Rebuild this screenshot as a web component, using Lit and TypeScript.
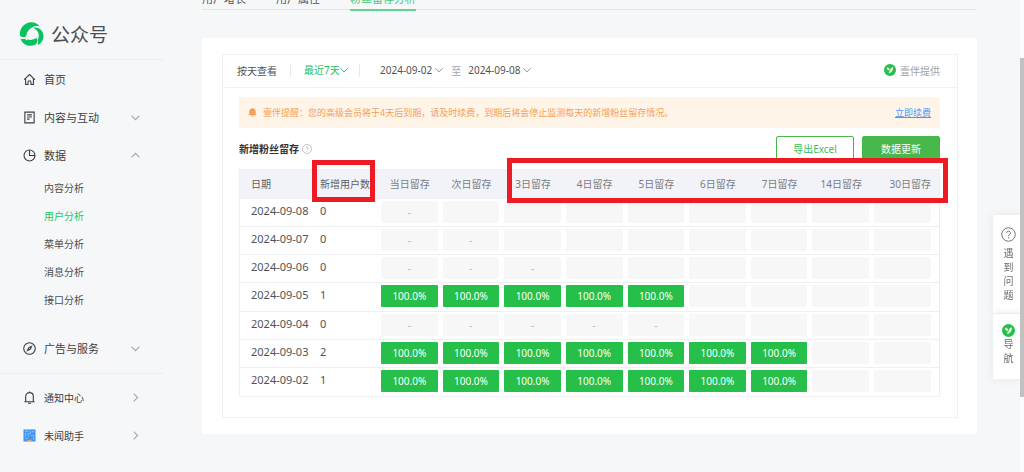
import { LitElement, html, css, svg, nothing } from "lit";
import { customElement, property, state } from "lit/decorators.js";
import { classMap } from "lit/directives/class-map.js";

const baseStyles = css`
  :host {
    display: block;
    box-sizing: border-box;
    font-family: "Noto Sans", "Noto Sans CJK SC", sans-serif;
    font-size: 10px;
    color: #505356;
  }
  *,
  *::before,
  *::after {
    box-sizing: border-box;
  }
  a {
    color: inherit;
    text-decoration: none;
  }
  button,
  select {
    font: inherit;
    color: inherit;
    background: none;
    border: 0;
    padding: 0;
    margin: 0;
    cursor: pointer;
  }
  svg {
    display: block;
    flex: none;
  }
`;

const chevron = (dir: "down" | "up" | "right", size = 9) => {
  const d = {
    down: "M0.6 3 L5 7.4 L9.4 3",
    up: "M0.6 7 L5 2.6 L9.4 7",
    right: "M3 0.6 L7.4 5 L3 9.4",
  }[dir];
  return html`<svg width=${size} height=${size} viewBox="0 0 10 10" fill="none" stroke="currentColor" aria-hidden="true">
    <path d=${d} stroke-width="1.2" />
  </svg>`;
};

const leafBadge = (size: number) => html`<svg width=${size} height=${size} viewBox="0 0 24 24" aria-hidden="true">
  <circle cx="12" cy="12" r="12" fill="#25bf49" />
  <path d="M6 7.4 C9.4 7 10.8 8.8 11 12.4 C8 12.6 6 10.8 6 7.4 Z" fill="#fff" stroke="#fff" stroke-width="0.8" />
  <path d="M18.4 6.6 C14.6 6.8 13 9.4 12.6 12 C12.2 14.4 11.2 15.4 9.2 16 L10.6 18.4 C15.6 17 18.2 12.4 18.4 6.6 Z" fill="#fff" />
</svg>`;

const questionMark = (size: number, stroke: number) => html`<svg width=${size} height=${size} viewBox="0 0 16 16" fill="none" stroke="currentColor" stroke-width=${stroke} aria-hidden="true">
  <circle cx="8" cy="8" r="7.2" />
  <path d="M5.9 6.5 C5.9 3.8 10.1 3.8 10.1 6.4 C10.1 7.8 8 8 8 9.7" />
  <path d="M8 10.8 V12.1" />
</svg>`;

const icons: Record<string, unknown> = {
  home: svg`<path d="M1.2 7.2 L7 1.6 L12.8 7.2 M2.8 6.2 V12.4 H5.4 V9.6 Q5.4 8.3 7 8.3 Q8.6 8.3 8.6 9.6 V12.4 H11.2 V6.2" />`,
  doc: svg`<path d="M2 1.2 H12 V12.8 H2 Z M4.4 4.2 H9.6 M4.4 6.5 H9.6 M4.4 8.8 H7" />`,
  pie: svg`<circle cx="7" cy="7" r="5.9" /><path d="M7 1.1 V7 H12.9" />`,
  compass: svg`<circle cx="7" cy="7" r="6.2" /><path d="M10 4 L8.1 8.1 L4 10 L5.9 5.9 Z" fill="currentColor" stroke-width="0.5" /><path d="M6.4 7.6 L7.6 6.4" stroke="#fff" stroke-width="0.7" />`,
  bell: svg`<path d="M1.4 11.6 H12.6 M2.9 11.6 V6 C2.9 3.4 4.7 1.8 7 1.8 C9.3 1.8 11.1 3.4 11.1 6 V11.6 M7 1.8 V0.6 M5.4 13.2 H8.6" />`,
  helper: svg`<rect x="0.5" y="0.5" width="13" height="13" fill="#4596f0" stroke="none" />
    <path d="M2.2 2.4 H6 M8 2.2 V5.4 M2.6 4.6 V8 M4.6 5 H7 M9.6 3 H12 M4.6 7.4 H6.6 M8.4 7 H12 M2.4 10 H5 M11.4 8.6 V11.6" stroke="#a9cffb" stroke-width="0.8" />
    <path d="M4.6 11.2 L7 12.4 L9.4 11.2 L8.6 14 H5.4 Z" fill="#f2b866" stroke="none" />`,
};

interface NavEntry {
  label: string;
  icon: string;
  arrow?: "down" | "up" | "right";
  children?: string[];
}

@customElement("side-nav")
export class SideNav extends LitElement {
  @property() active = "用户分析";

  private primary: NavEntry[] = [
    { label: "首页", icon: "home" },
    { label: "内容与互动", icon: "doc", arrow: "down" },
    { label: "数据", icon: "pie", arrow: "up", children: ["内容分析", "用户分析", "菜单分析", "消息分析", "接口分析"] },
    { label: "广告与服务", icon: "compass", arrow: "down" },
  ];
  private secondary: NavEntry[] = [
    { label: "通知中心", icon: "bell", arrow: "right" },
    { label: "未闻助手", icon: "helper", arrow: "right" },
  ];

  static styles = [
    baseStyles,
    css`
      .brand {
        display: flex;
        align-items: center;
        gap: 7px;
        height: 60px;
        padding: 9px 0 0 19px;
        border-bottom: 1px solid #eceef0;
        font-size: 19px;
        color: #4c4f52;
      }
      .entry {
        display: flex;
        align-items: center;
        gap: 8px;
        height: 38px;
        padding: 0 24px 0 23px;
        font-size: 11px;
        color: #3c3f42;
      }
      .label {
        flex: 1;
      }
      .arrow {
        color: #a4a7aa;
      }
      .children {
        display: grid;
        margin-bottom: 15px;
      }
      .child {
        height: 28px;
        padding-left: 44px;
        line-height: 28px;
        color: #4c4f52;
      }
      .current {
        color: #1dc567;
      }
      .secondary {
        margin-top: 6px;
        padding-top: 4px;
        border-top: 1px solid #eceef0;
      }
      .secondary .entry {
        font-size: 10px;
      }
    `,
  ];

  private entry(item: NavEntry) {
    return html`
      <a class="entry" href="#">
        <svg width="13" height="13" viewBox="0 0 14 14" fill="none" stroke="currentColor" stroke-width="1.2" aria-hidden="true">${icons[item.icon]}</svg>
        <span class="label">${item.label}</span>
        ${item.arrow ? html`<span class="arrow">${chevron(item.arrow)}</span>` : nothing}
      </a>
      ${item.children
        ? html`<div class="children">
            ${item.children.map(
              (c) => html`<a href="#" class=${classMap({ child: true, current: c === this.active })}>${c}</a>`
            )}
          </div>`
        : nothing}
    `;
  }

  render() {
    return html`
      <div class="brand">
        <svg width="25" height="24" viewBox="0 0 24 24" fill="#0ac160" aria-hidden="true">
          <path d="M0.4 13.6 C-0.4 6.4 5 0.4 11.6 0.2 C15.6 0.2 18.6 2 20.2 4.6 C17.8 3.8 15.4 4 13.4 5 C9.8 6.8 7.6 9.4 7 12.4 C6.6 14.4 5.4 15.4 3.8 15.3 C2.4 15.2 1.2 14.6 0.4 13.6 Z" />
          <path d="M14 5.8 C18.8 4.6 23.6 8.4 24 13.4 C24.2 17.8 21.8 21.4 18 23.2 C18.8 21 18.6 19.4 18 18.2 C20 15 19.8 11 17.4 8.4 C16.4 7.4 15 6.8 14 5.8 Z" />
          <path d="M1 16.4 C2.6 17.2 4.6 17.4 6.2 16.6 L6.2 18.6 L8.4 17.6 C11.2 18.4 14.4 17.8 17 15.8 C18 18.4 17.8 20.8 16.4 22.4 C10.6 25.4 3.2 23.4 1 16.4 Z" />
        </svg>
        <span>公众号</span>
      </div>
      <nav>${this.primary.map((i) => this.entry(i))}</nav>
      <nav class="secondary">${this.secondary.map((i) => this.entry(i))}</nav>
    `;
  }
}

interface DayRow {
  date: string;
  added: number;
  cells: string;
}

@customElement("retention-table")
export class RetentionTable extends LitElement {
  private columns = ["当日留存", "次日留存", "3日留存", "4日留存", "5日留存", "6日留存", "7日留存", "14日留存", "30日留存"];

  /* one letter per column: "-" no data, "F" full retention, "." not reached yet */
  @property({ attribute: false }) rows: DayRow[] = [
    { date: "2024-09-08", added: 0, cells: "-........" },
    { date: "2024-09-07", added: 0, cells: "--......." },
    { date: "2024-09-06", added: 0, cells: "---......" },
    { date: "2024-09-05", added: 1, cells: "FFFFF...." },
    { date: "2024-09-04", added: 0, cells: "-----...." },
    { date: "2024-09-03", added: 2, cells: "FFFFFFF.." },
    { date: "2024-09-02", added: 1, cells: "FFFFFFF.." },
  ];

  static styles = [
    baseStyles,
    css`
      :host {
        position: relative;
      }
      table {
        width: 100%;
        height: 228px;
        table-layout: fixed;
        border-collapse: separate;
        border-spacing: 0;
        border: 1px solid #eeeff1;
      }
      .c-date {
        width: 80px;
      }
      .c-added {
        width: 59px;
      }
      .c-last {
        width: 67px;
      }
      th {
        height: 29px;
        padding: 0 0 3px;
        background: #f2f3f8;
        font-weight: 400;
        color: #7b7d80;
        white-space: nowrap;
      }
      th.lead {
        text-align: left;
        color: #5c5f62;
      }
      td {
        height: 28px;
        padding: 0 3px 1px 2px;
        border-bottom: 1px solid #eeeff1;
      }
      tr:last-child td {
        border-bottom: 0;
      }
      td.lead {
        padding: 0 0 3px;
        font-size: 11px;
        line-height: 20px;
      }
      .lead:first-child {
        padding-left: 11px;
      }
      th:last-child {
        padding-right: 8px;
        text-align: right;
      }
      td:last-child {
        padding-right: 8px;
      }
      .pill {
        height: 22px;
        border-radius: 1px;
        background: #f7f7f7;
        line-height: 22px;
        text-align: center;
        color: #b4b6b8;
      }
      .full {
        background: #25bf49;
        color: #fff;
      }
      .mark {
        position: absolute;
        border: 5px solid #ed1c24;
        pointer-events: none;
      }
      .mark-added {
        left: 73px;
        top: -9px;
        width: 63px;
        height: 42px;
      }
      .mark-days {
        left: 268px;
        right: -8px;
        top: -11px;
        height: 45px;
      }
    `,
  ];

  render() {
    return html`
      <table>
        <colgroup>
          <col class="c-date" />
          <col class="c-added" />
          ${this.columns.map((_, i) => html`<col class=${i === this.columns.length - 1 ? "c-last" : "c-day"} />`)}
        </colgroup>
        <thead>
          <tr>
            <th class="lead" scope="col">日期</th>
            <th class="lead" scope="col">新增用户数</th>
            ${this.columns.map((c) => html`<th scope="col">${c}</th>`)}
          </tr>
        </thead>
        <tbody>
          ${this.rows.map(
            (r) => html`<tr>
              <td class="lead">${r.date}</td>
              <td class="lead">${r.added}</td>
              ${[...r.cells].map(
                (c) => html`<td>
                  <div class=${classMap({ pill: true, full: c === "F" })}>${c === "F" ? "100.0%" : c === "-" ? "-" : nothing}</div>
                </td>`
              )}
            </tr>`
          )}
        </tbody>
      </table>
      <div class="mark mark-added"></div>
      <div class="mark mark-days"></div>
    `;
  }
}

@customElement("app-root")
export class AppRoot extends LitElement {
  @state() private tab = "粉丝留存分析";

  static styles = [
    baseStyles,
    css`
      .page {
        display: flex;
        min-height: 100vh;
        overflow: hidden;
        background: #f6f7f9;
      }
      side-nav {
        flex: none;
        width: 164px;
      }
      main {
        flex: 1;
        min-width: 0;
        padding: 0 47px 38px 38px;
      }
      .tabs {
        display: flex;
        gap: 30px;
        height: 36px;
        margin-top: -26px;
        border-bottom: 1px solid #e4e6e8;
      }
      .tab {
        height: 37px;
        padding-top: 15px;
        border-bottom: 2px solid transparent;
        font-size: 11px;
        line-height: 20px;
        color: #505356;
      }
      .chosen {
        color: #3cc97a;
        border-color: #5dd394;
      }
      .card {
        margin-top: 28px;
        padding: 16px 19px 16px 20px;
        background: #fff;
      }
      .panel {
        border: 1px solid #f0f1f2;
      }
      .toolbar {
        display: flex;
        align-items: center;
        height: 33px;
        padding: 0 17px 2px 14px;
        border-bottom: 1px solid #f0f1f2;
      }
      .rule {
        width: 1px;
        height: 13px;
        background: #e8e9ea;
      }
      .range {
        display: flex;
        align-items: center;
        margin: 0 11px 0 13px;
        color: #25bf62;
      }
      .unit {
        margin-right: 13px;
      }
      .range select {
        appearance: none;
        outline: 0;
      }
      .date {
        display: flex;
        align-items: center;
        gap: 3px;
        color: #505356;
      }
      .date svg {
        color: #8c8f92;
      }
      .from {
        margin-left: 20px;
      }
      .to {
        margin: 0 7px 0 8px;
        color: #a4a6a8;
      }
      .provider {
        display: flex;
        align-items: center;
        gap: 4px;
        margin-left: auto;
        color: #a0a2a4;
      }
      .body {
        padding: 9px 17px 20px 16px;
      }
      .notice {
        display: flex;
        align-items: center;
        gap: 6px;
        height: 31px;
        padding: 0 9px;
        background: #fff4e8;
        font-size: 9px;
        color: #f5a056;
      }
      .notice a {
        margin-left: auto;
        color: #4a97f5;
        text-decoration: underline;
      }
      .head {
        display: flex;
        align-items: center;
        gap: 8px;
        margin: 8px 0;
      }
      h2 {
        display: flex;
        align-items: center;
        gap: 3px;
        margin: 0 auto 0 0;
        font-size: 10px;
        color: #303336;
      }
      h2 svg {
        color: #a8aaac;
      }
      .btn {
        width: 78px;
        height: 25px;
        border: 1px solid #46b84c;
        border-radius: 2px;
        background: #fff;
        color: #3dbb5c;
      }
      .solid {
        background: #46b84c;
        color: #fff;
      }
      .help {
        position: fixed;
        top: 215px;
        right: 4px;
        display: grid;
        gap: 1px;
        width: 27px;
      }
      .help a {
        display: flex;
        flex-direction: column;
        align-items: center;
        background: #fff;
        border-radius: 2px 0 0 2px;
        box-shadow: 0 0 8px #e2e4e7;
        color: #6a6d70;
        line-height: 14px;
        text-align: center;
      }
      .ask {
        gap: 4px;
        padding: 12px 8px 11px;
      }
      .guide {
        padding: 10px 8px 14px;
      }
      .track {
        position: fixed;
        top: 0;
        right: 0;
        bottom: 0;
        width: 4px;
        padding-top: 58px;
        background: #fbfbfb;
      }
      .thumb {
        height: 82%;
        background: #c1c1c1;
      }
    `,
  ];

  render() {
    return html`
      <div class="page">
        <side-nav></side-nav>
        <main>
          <nav class="tabs">
            ${["用户增长", "用户属性", "粉丝留存分析"].map(
              (t) => html`<a href="#" class=${classMap({ tab: true, chosen: t === this.tab })} @click=${() => (this.tab = t)}>${t}</a>`
            )}
          </nav>
          <section class="card">
            <div class="panel">
              <div class="toolbar">
                <span class="unit">按天查看</span>
                <span class="rule"></span>
                <div class="range">
                  <select aria-label="时间范围">
                    <option>最近7天</option>
                  </select>
                  ${chevron("down", 8)}
                </div>
                <span class="rule"></span>
                <button class="date from">2024-09-02 ${chevron("down", 8)}</button>
                <span class="to">至</span>
                <button class="date">2024-09-08 ${chevron("down", 8)}</button>
                <span class="provider">${leafBadge(12)}壹伴提供</span>
              </div>
              <div class="body">
                <div class="notice">
                  <svg width="9" height="9" viewBox="0 0 10 10" fill="#f5a056" aria-hidden="true">
                    <path d="M5 0.4 C7.2 0.4 8.5 1.9 8.5 4 V6.6 L9.6 8 H0.4 L1.5 6.6 V4 C1.5 1.9 2.8 0.4 5 0.4 Z M3.8 8.6 H6.2 V9.4 H3.8 Z" />
                  </svg>
                  <span>壹伴提醒：您的高级会员将于4天后到期，请及时续费，到期后将会停止监测每天的新增粉丝留存情况。</span>
                  <a href="#">立即续费</a>
                </div>
                <div class="head">
                  <h2>新增粉丝留存 ${questionMark(10, 1.1)}</h2>
                  <button class="btn">导出Excel</button>
                  <button class="btn solid">数据更新</button>
                </div>
                <retention-table></retention-table>
              </div>
            </div>
          </section>
        </main>
      </div>
      <aside class="help">
        <a class="ask" href="#">${questionMark(15, 1)}<span>遇到问题</span></a>
        <a class="guide" href="#">${leafBadge(13)}<span>导航</span></a>
      </aside>
      <div class="track"><div class="thumb"></div></div>
    `;
  }
}
